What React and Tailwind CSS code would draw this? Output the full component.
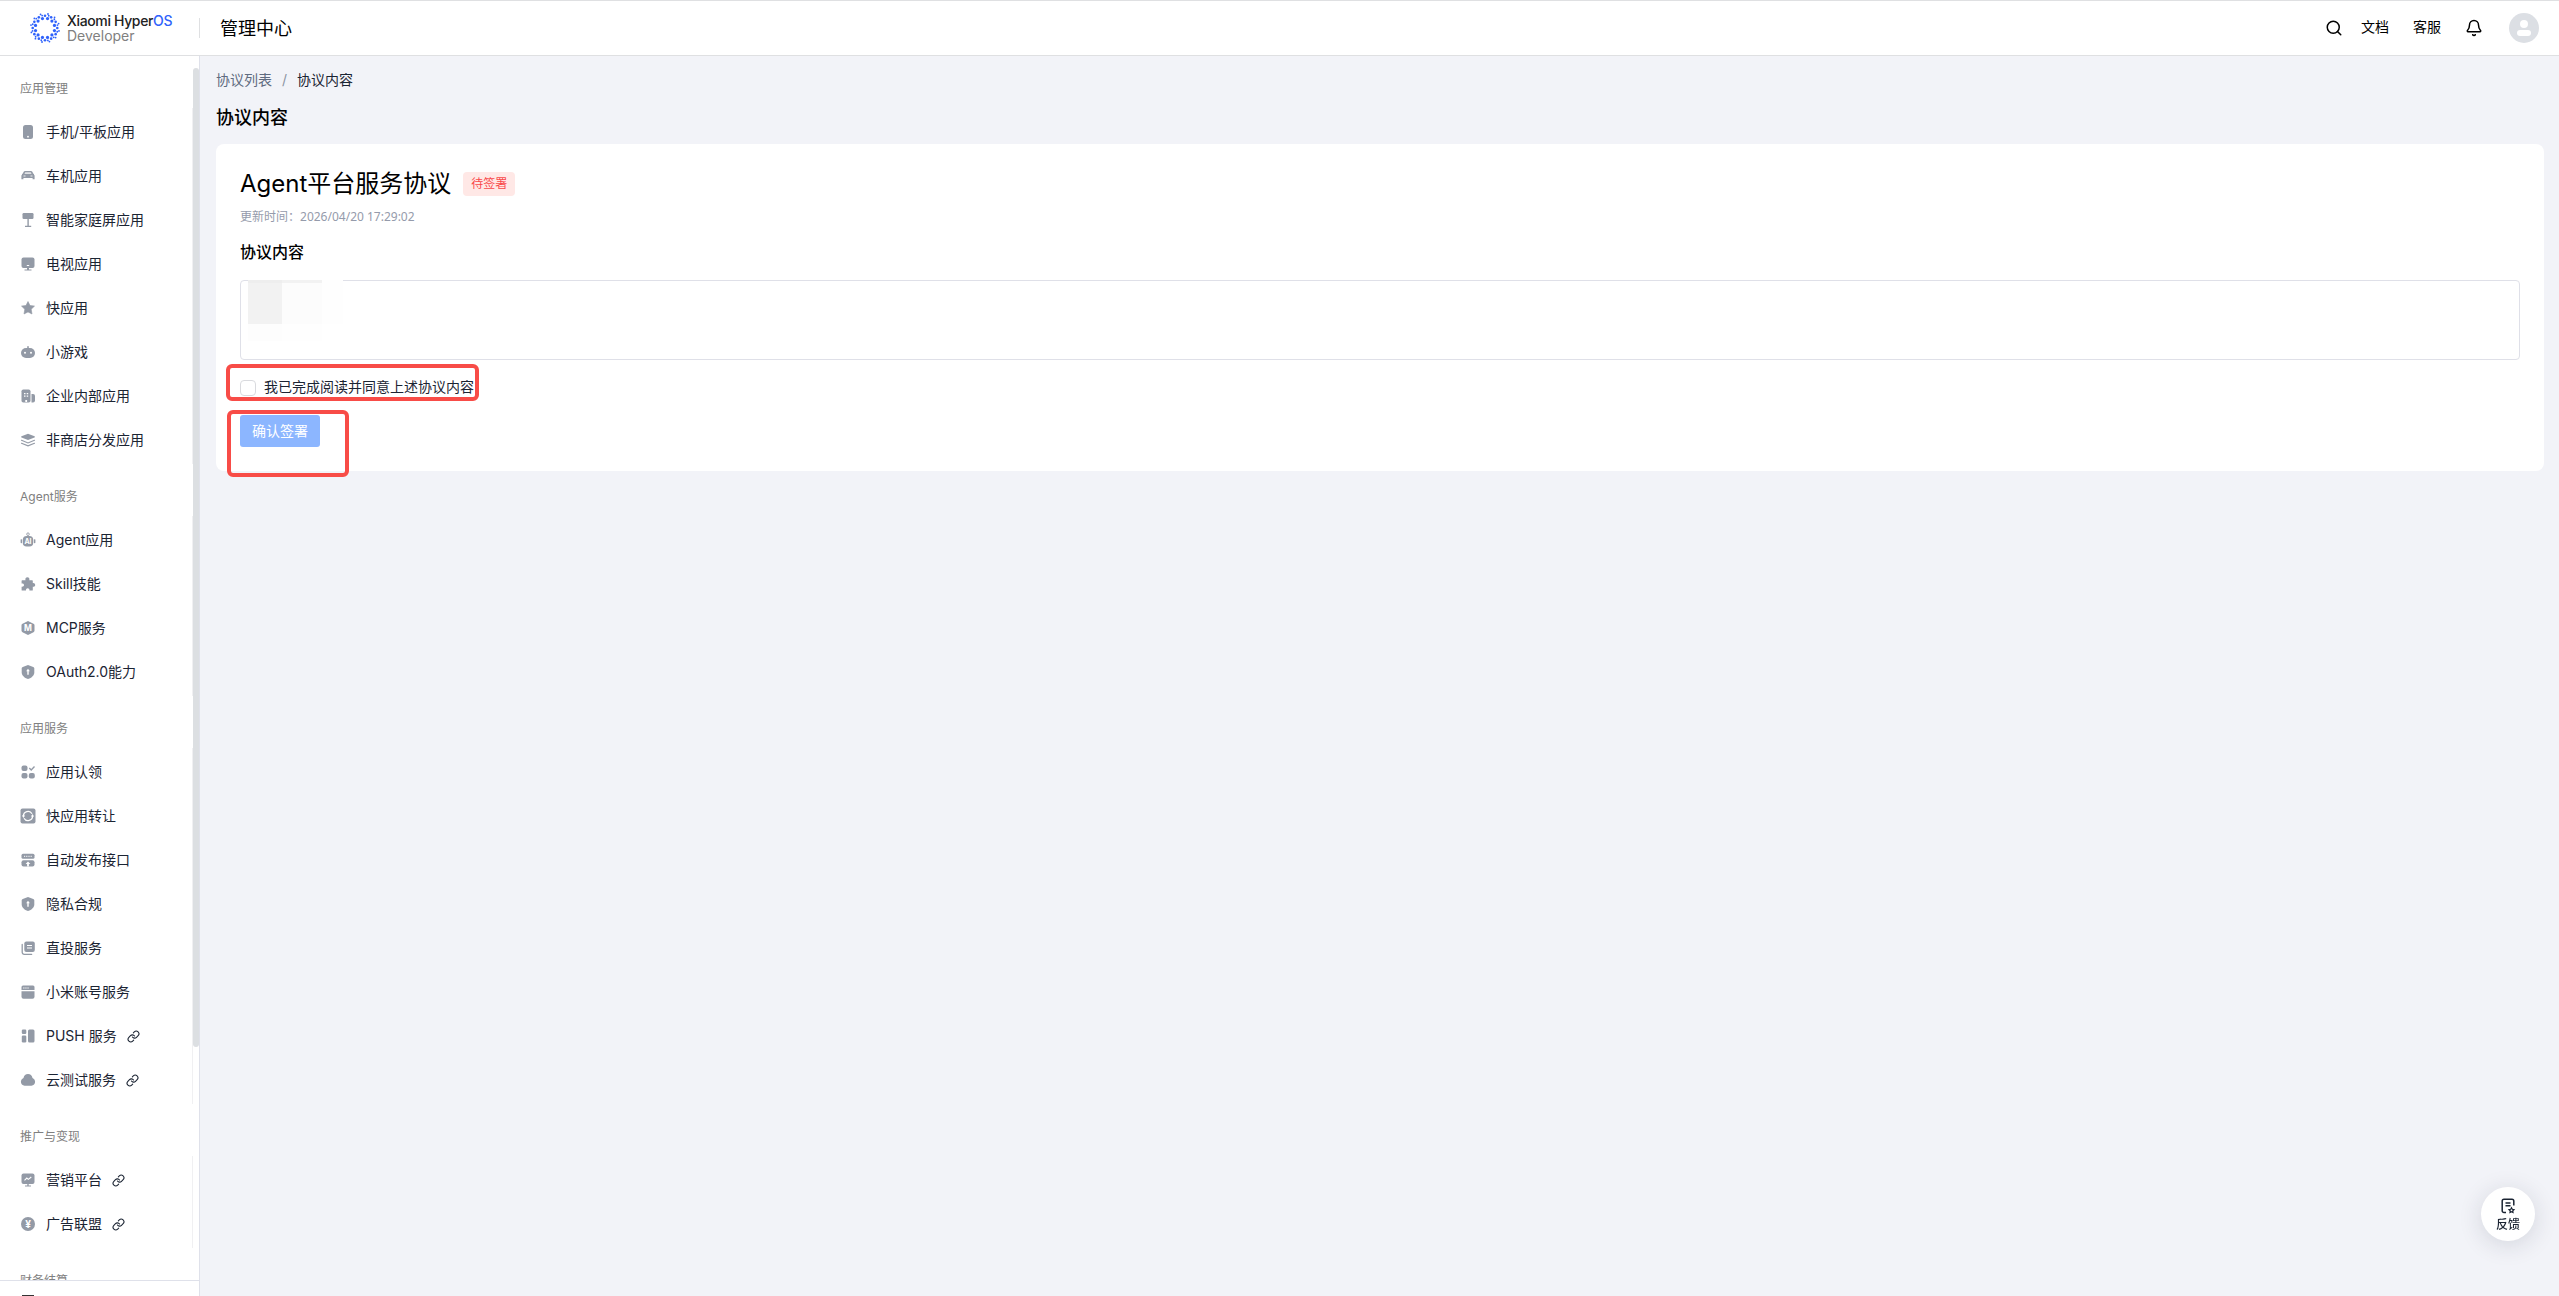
import React, { useState } from "react";
import { Search, Bell, Link } from "lucide-react";

const icons = {
  phone: (
    <>
      <rect x="3" y="1" width="10" height="14" rx="2.5" />
      <circle cx="8" cy="12.7" r="0.9" fill="#fff" />
    </>
  ),
  car: (
    <>
      <path d="M5.2 3h5.6c.8 0 1.400.4 1.700 1.100l.7 1.700h.8v1l.6.8v3.600h-2v-1.200H3.400v1.200h-2V7.600l.6-.8v-1h.8l.7-1.700C3.800 3.400 4.400 3 5.200 3z" />
      <path d="M5.2 4.200h5.600l.7 1.800h-7z" fill="#fff" opacity=".7" />
      <path d="M3.500 8h2M10.500 8h2" stroke="#fff" strokeWidth=".8" />
    </>
  ),
  sign: (
    <>
      <rect x="2.5" y="1" width="11" height="6" rx="1.2" />
      <path d="M7.4 7h1.4v7H7.4zM5 13.700h6.200V15H5z" />
    </>
  ),
  tv: (
    <>
      <rect x="1.5" y="1.5" width="13" height="10.5" rx="2" />
      <path d="M7 12h2v1.5h2.5v1h-7v-1H7z" />
      <path d="M6.8 9.5h2.4" stroke="#fff" strokeWidth="1" />
    </>
  ),
  star: <path d="M8 1.5l2 4 4.5.6-3.3 3.2.8 4.7-4-2.1L4 14l.8-4.7L1.500 6.100 6 5.500z" strokeLinejoin="round" stroke="#939aa6" strokeWidth=".6" />,
  game: (
    <>
      <rect x="7.2" y="2" width="1.6" height="3" rx=".8" />
      <rect x="1" y="4" width="14" height="10" rx="5" />
      <circle cx="5" cy="8.700" r="1" fill="#fff" />
      <circle cx="11" cy="8.700" r="1" fill="#fff" />
    </>
  ),
  building: (
    <>
      <rect x="1.5" y="1.5" width="9" height="13" rx="1.8" />
      <path d="M11.5 6H13a2 2 0 0 1 2 2v4.5a2 2 0 0 1-2 2h-1.500z" />
      <path d="M4 5h1.5v1.300H4zM6.700 5h1.500v1.300H6.700zM4 7.500h1.500v1.300H4zM6.700 7.500h1.500v1.300H6.700zM5.300 12h1.800v2H5.300z" fill="#fff" />
    </>
  ),
  layers: (
    <>
      <path d="M8 1.8l6.5 2.4c.5.3.5.9 0 1.200L8 8 1.500 5.400c-.5-.3-.5-.9 0-1.200z" />
      <path d="M1.5 8.300L8 10.900l6.500-2.600M1.500 11.200L8 13.800l6.500-2.600" fill="none" stroke="#939aa6" strokeWidth="1.1" strokeLinecap="round" />
    </>
  ),
  agent: (
    <>
      <circle cx="8" cy="2.2" r="1.3" fill="none" stroke="#939aa6" strokeWidth=".9" />
      <rect x="2.8" y="4" width="10.4" height="10.5" rx="3.8" />
      <rect x="0.6" y="7.2" width="1.5" height="4" rx=".6" />
      <rect x="13.9" y="7.2" width="1.5" height="4" rx=".6" />
      <text x="8" y="12" fontSize="7" fontWeight="700" textAnchor="middle" fill="#fff">AI</text>
    </>
  ),
  puzzle: (
    <path d="M2.2 4.300h3.300c-.5-1.800.5-3 1.900-3s2.400 1.200 1.900 3h2.900c.4 0 .6.300.6.600v2.200c1.300-.3 2.400.6 2.400 1.800s-1.100 2.100-2.400 1.800V14c0 .3-.2.600-.6.600H9.400c.3-1.500-.5-2.400-1.700-2.400s-2 .9-1.700 2.400H2.200c-.4 0-.6-.3-.6-.6v-3.200c1.500.2 2.400-.5 2.400-1.700S3.100 7.200 1.600 7.500V4.900c0-.3.200-.6.600-.6z" />
  ),
  mcp: (
    <>
      <path d="M8 1l5.500 2.800c.6.300 1 .8 1 1.400v5.600c0 .6-.4 1.100-1 1.400L8 15l-5.500-2.800c-.6-.3-1-.8-1-1.400V5.200c0-.6.4-1.100 1-1.400z" />
      <text x="8" y="11" fontSize="8.5" fontWeight="700" textAnchor="middle" fill="#fff">M</text>
    </>
  ),
  shield: (
    <>
      <path d="M8 1l5.200 1.900c.7.300 1.100.8 1.100 1.500v3.800c0 3.100-2.500 5.500-6.300 6.900-3.800-1.400-6.300-3.800-6.300-6.900V4.400c0-.7.4-1.200 1.100-1.500z" />
      <path d="M8 4.800l1.900 2.400H8.700v3.500H7.300V7.200H6.100z" fill="#fff" />
    </>
  ),
  claim: (
    <>
      <rect x="1.5" y="1.5" width="6" height="5.5" rx="2" />
      <rect x="1.5" y="9" width="6" height="5.5" rx="2" />
      <rect x="8.8" y="9" width="6" height="5.5" rx="2" />
      <path d="M9.300 4l1.900 1.900 3.300-3.300" fill="none" stroke="#939aa6" strokeWidth="1.4" />
    </>
  ),
  transfer: (
    <>
      <rect x="0.5" y="0.5" width="15" height="15" rx="2" />
      <path d="M12 5.800A4.600 4.600 0 0 0 3.400 8M4 10.200A4.600 4.600 0 0 0 12.600 8" fill="none" stroke="#fff" strokeWidth="1.3" />
      <path d="M1.900 7.600h3.200L3.500 10zM10.900 8.400h3.200L12.500 6z" fill="#fff" />
    </>
  ),
  publish: (
    <>
      <rect x="1.5" y="1.8" width="13" height="5" rx="1.5" />
      <path d="M4 4.300h8" stroke="#fff" strokeWidth="1" strokeDasharray="1.2 1" />
      <rect x="1.5" y="8.2" width="13" height="6.300" rx="2" />
      <path d="M8 9.500l2.400 2.500H8.900v2.500H7.100V12H5.600z" fill="#fff" />
    </>
  ),
  copy: (
    <>
      <rect x="4.3" y="1.5" width="10.5" height="10.5" rx="2" />
      <path d="M2.200 4.500v7.800a2 2 0 0 0 2 2h7.500" fill="none" stroke="#939aa6" strokeWidth="1.3" strokeLinecap="round" />
      <path d="M7 5.500h5M7 8h5" stroke="#fff" strokeWidth="1.1" />
    </>
  ),
  account: (
    <>
      <path d="M3 1.500h10A1.500 1.500 0 0 1 14.500 3v3h-13V3A1.500 1.500 0 0 1 3 1.500z" />
      <path d="M1.500 7.200h13v5.500a2 2 0 0 1-2 2h-9a2 2 0 0 1-2-2z" />
      <path d="M3.200 4h6" stroke="#fff" strokeWidth="1" strokeDasharray="1.3 .8" />
    </>
  ),
  push: (
    <>
      <rect x="1.8" y="1.5" width="4.5" height="4.5" rx="1.2" />
      <rect x="1.8" y="7.5" width="4.5" height="7" rx="1.2" />
      <rect x="8" y="1.5" width="6.5" height="13" rx="1.5" />
    </>
  ),
  cloud: <path d="M8 2c2.400 0 4 1.500 4.500 3.900 1.600.8 2.600 2.200 2.600 3.900 0 2.200-1.500 3.900-3.700 3.900H4.600C2.400 13.700.9 12 .9 9.800c0-1.700 1-3.100 2.600-3.900C4 3.500 5.600 2 8 2z" />,
  marketing: (
    <>
      <rect x="1.5" y="1.5" width="13" height="10.5" rx="2" />
      <path d="M7.300 12h1.400v1.500H11v1H5v-1h2.300z" />
      <path d="M4.500 8.300l2.300-2.200 1.500 1.300 3-2.400" fill="none" stroke="#fff" strokeWidth="1.1" />
    </>
  ),
  coin: (
    <>
      <circle cx="8" cy="8" r="7" />
      <text x="8" y="11.5" fontSize="10" fontWeight="700" textAnchor="middle" fill="#fff">¥</text>
    </>
  ),
};

const menu = [
  {
    title: "应用管理",
    items: [
      { icon: "phone", label: "手机/平板应用" },
      { icon: "car", label: "车机应用" },
      { icon: "sign", label: "智能家庭屏应用" },
      { icon: "tv", label: "电视应用" },
      { icon: "star", label: "快应用" },
      { icon: "game", label: "小游戏" },
      { icon: "building", label: "企业内部应用" },
      { icon: "layers", label: "非商店分发应用" },
    ],
  },
  {
    title: "Agent服务",
    items: [
      { icon: "agent", label: "Agent应用" },
      { icon: "puzzle", label: "Skill技能" },
      { icon: "mcp", label: "MCP服务" },
      { icon: "shield", label: "OAuth2.0能力" },
    ],
  },
  {
    title: "应用服务",
    items: [
      { icon: "claim", label: "应用认领" },
      { icon: "transfer", label: "快应用转让" },
      { icon: "publish", label: "自动发布接口" },
      { icon: "shield", label: "隐私合规" },
      { icon: "copy", label: "直投服务" },
      { icon: "account", label: "小米账号服务" },
      { icon: "push", label: "PUSH 服务", external: true },
      { icon: "cloud", label: "云测试服务", external: true },
    ],
  },
  {
    title: "推广与变现",
    items: [
      { icon: "marketing", label: "营销平台", external: true },
      { icon: "coin", label: "广告联盟", external: true },
    ],
  },
  { title: "财务结算", items: [] },
];

// rings of dots, each one rotated against the next
const rings = [
  { r: 9.8, size: 1.6, count: 12, shift: 15 },
  { r: 12.3, size: 1.3, count: 12, shift: 0 },
  { r: 14.3, size: 0.9, count: 12, shift: 12 },
  { r: 12.8, size: 0.9, count: 12, shift: 17 },
];

function Logo() {
  return (
    <a href="#" className="flex items-center gap-1.5">
      <svg viewBox="-16 -16 32 32" className="size-8" fill="#2f62fb">
        {rings.map((ring) =>
          Array.from({ length: ring.count }, (_, i) => {
            const a = (((i * 360) / ring.count + ring.shift) * Math.PI) / 180;
            return (
              <circle
                key={`${ring.r}-${i}`}
                cx={ring.r * Math.sin(a)}
                cy={-ring.r * Math.cos(a)}
                r={ring.size}
              />
            );
          })
        )}
      </svg>
      <span className="flex flex-col text-[14px] leading-[15px] whitespace-nowrap">
        <span className="font-medium tracking-tight text-[#222]">
          Xiaomi Hyper<span className="text-[#2f62fb]">OS</span>
        </span>
        <span className="text-[#808080]">Developer</span>
      </span>
    </a>
  );
}

function Header() {
  return (
    <header className="flex h-14 shrink-0 items-center border-y border-[#dfe0e2] bg-white">
      <div className="flex h-5 w-[200px] shrink-0 items-center border-r border-[#dfe0e2] pl-[29px]">
        <Logo />
      </div>
      <h1 className="pl-5 text-[18px]">管理中心</h1>
      <div className="ml-auto flex items-center gap-6 pr-5 text-[14px] leading-5">
        <button aria-label="搜索" className="-mr-1.5">
          <Search size={18} strokeWidth={2} />
        </button>
        <a href="#" className="pb-0.5">文档</a>
        <a href="#" className="pb-0.5">客服</a>
        <button aria-label="通知" className="mr-0.5">
          <Bell size={18} strokeWidth={2} />
        </button>
        <button aria-label="账号">
          <svg viewBox="0 0 30 30" className="size-[30px]">
            <circle cx="15" cy="15" r="15" fill="#dcdfe4" />
            <circle cx="15" cy="11" r="4" fill="#fff" />
            <rect x="8" y="17" width="14" height="6" rx="3" fill="#fff" />
          </svg>
        </button>
      </div>
    </header>
  );
}

function Sidebar() {
  return (
    <aside className="flex w-[200px] shrink-0 flex-col border-r border-[#dfe1ea] bg-white">
      <div className="relative min-h-0 flex-1 overflow-hidden">
        <nav>
          {menu.map((group) => (
            <section key={group.title}>
              <h2 className="pt-6 pb-2.5 pl-5 text-[12px] leading-[18px] text-[#808080]">{group.title}</h2>
              <ul className="mr-1.5 border-r border-[#f0f0f2] py-0.5">
                {group.items.map((item) => (
                  <li key={item.label}>
                    <a href="#" className="flex h-11 items-center gap-2.5 pl-5 text-[14px] text-[#1b2433]">
                      <svg viewBox="0 0 16 16" className="size-4" fill="#939aa6">
                        {icons[item.icon]}
                      </svg>
                      <span className="pb-0.5">{item.label}</span>
                      {item.external && <Link size={13} strokeWidth={2} />}
                    </a>
                  </li>
                ))}
              </ul>
            </section>
          ))}
        </nav>
        <div className="absolute top-3 right-0 h-4/5 w-1.5 rounded-full bg-[#dcdfe2]" />
      </div>
      <div className="h-4 shrink-0 overflow-hidden border-t border-[#dfe1ea] pt-3.5 pl-5">
        <button aria-label="收起菜单" className="block">
          <svg viewBox="0 0 16 16" className="size-4" stroke="#333" strokeWidth="2">
            <path d="M2 1h12M2 8h12M2 15h12" />
          </svg>
        </button>
      </div>
    </aside>
  );
}

export default function App() {
  const [agreed, setAgreed] = useState(false);

  return (
    <div className="flex h-screen flex-col bg-[#f2f3f8] font-['Inter','Noto_Sans_CJK_SC',sans-serif] text-black">
      <Header />
      <div className="flex min-h-0 flex-1">
        <Sidebar />
        <main className="min-w-0 flex-1 pt-3 pr-[15px] pl-4">
          <nav aria-label="面包屑" className="flex gap-2.5 text-[14px] leading-6">
            <a href="#" className="text-[#5f6b80]">协议列表</a>
            <span className="text-[#8b93a3]">/</span>
            <span className="text-[#1b2433]">协议内容</span>
          </nav>
          <h2 className="my-3 text-[18px] leading-7 font-medium">协议内容</h2>

          <div className="rounded-lg bg-white p-6">
            <div className="flex items-center gap-3">
              <h3 className="text-[24px] leading-8">Agent平台服务协议</h3>
              <span className="rounded bg-[#ffe8e6] px-2 text-[12px] leading-6 text-[#f9494a]">待签署</span>
            </div>
            <p className="mt-2 text-[12px] leading-[18px] text-[#959bab]">
              更新时间：
              <time className="font-['Noto_Sans',sans-serif]">2026/04/20 17:29:02</time>
            </p>
            <h4 className="mt-3.5 text-[16px] leading-6 font-medium">协议内容</h4>

            <div className="relative mt-4 h-20 rounded border border-[#dfe0e8]">
              {/* masked agreement name */}
              <div className="absolute -top-px left-[7px] grid h-[61px] w-[95px] grid-cols-[34px_40px_21px] grid-rows-[44px_17px] bg-white">
                <span className="border-t-3 border-[#eeeeee] bg-[#f2f2f2]" />
                <span className="border-t-3 border-[#f2f2f2] bg-[#fcfcfc]" />
                <span className="bg-[#fefefe]" />
                <span className="bg-[#fdfdfd]" />
                <span className="bg-[#fefefe]" />
              </div>
            </div>

            <div className="relative mt-4 flex">
              <label className="flex h-6 items-center gap-2 text-[14px] leading-5 text-[#1b2433]">
                <input
                  type="checkbox"
                  checked={agreed}
                  onChange={(e) => setAgreed(e.target.checked)}
                  className="size-4 appearance-none rounded border border-[#d9dade] bg-white checked:bg-[#3a78ff]"
                />
                <span className="pb-0.5">我已完成阅读并同意上述协议内容</span>
              </label>
              <div className="pointer-events-none absolute -top-3 -left-3.5 h-[37px] w-[253px] rounded-md border-4 border-[#f84c47]" />
            </div>
            <div className="relative mt-[15px] flex">
              <button className="h-8 w-20 rounded-[3px] bg-[#8cb6ff] pb-0.5 text-[14px] text-white">确认签署</button>
              <div className="pointer-events-none absolute -top-[5px] -left-[13px] h-[67px] w-[122px] rounded-md border-4 border-[#f84c47]" />
            </div>
          </div>
        </main>
      </div>

      <button className="fixed right-6 bottom-[55px] flex size-[54px] flex-col items-center justify-center gap-0.5 rounded-full bg-white pt-1 text-[12px] leading-[18px] font-medium text-[#1b2433] shadow-[0_4px_24px_rgba(30,35,60,0.14)]">
        <svg viewBox="0 0 16 16" className="size-4" fill="none" stroke="#1b2433" strokeWidth="1.5">
          <path d="M6 14.500H4A1.800 1.800 0 0 1 2.200 12.700V3A1.800 1.800 0 0 1 4 1.200h8A1.800 1.800 0 0 1 13.800 3v4.500M5.500 5h5M5.500 7.800h5" />
          <path d="M11.500 9.800l.8 1.500 1.700.3-1.200 1.200.2 1.700-1.500-.8-1.500.8.200-1.700L9 11.600l1.700-.3z" strokeWidth="1.2" />
        </svg>
        反馈
      </button>
    </div>
  );
}
